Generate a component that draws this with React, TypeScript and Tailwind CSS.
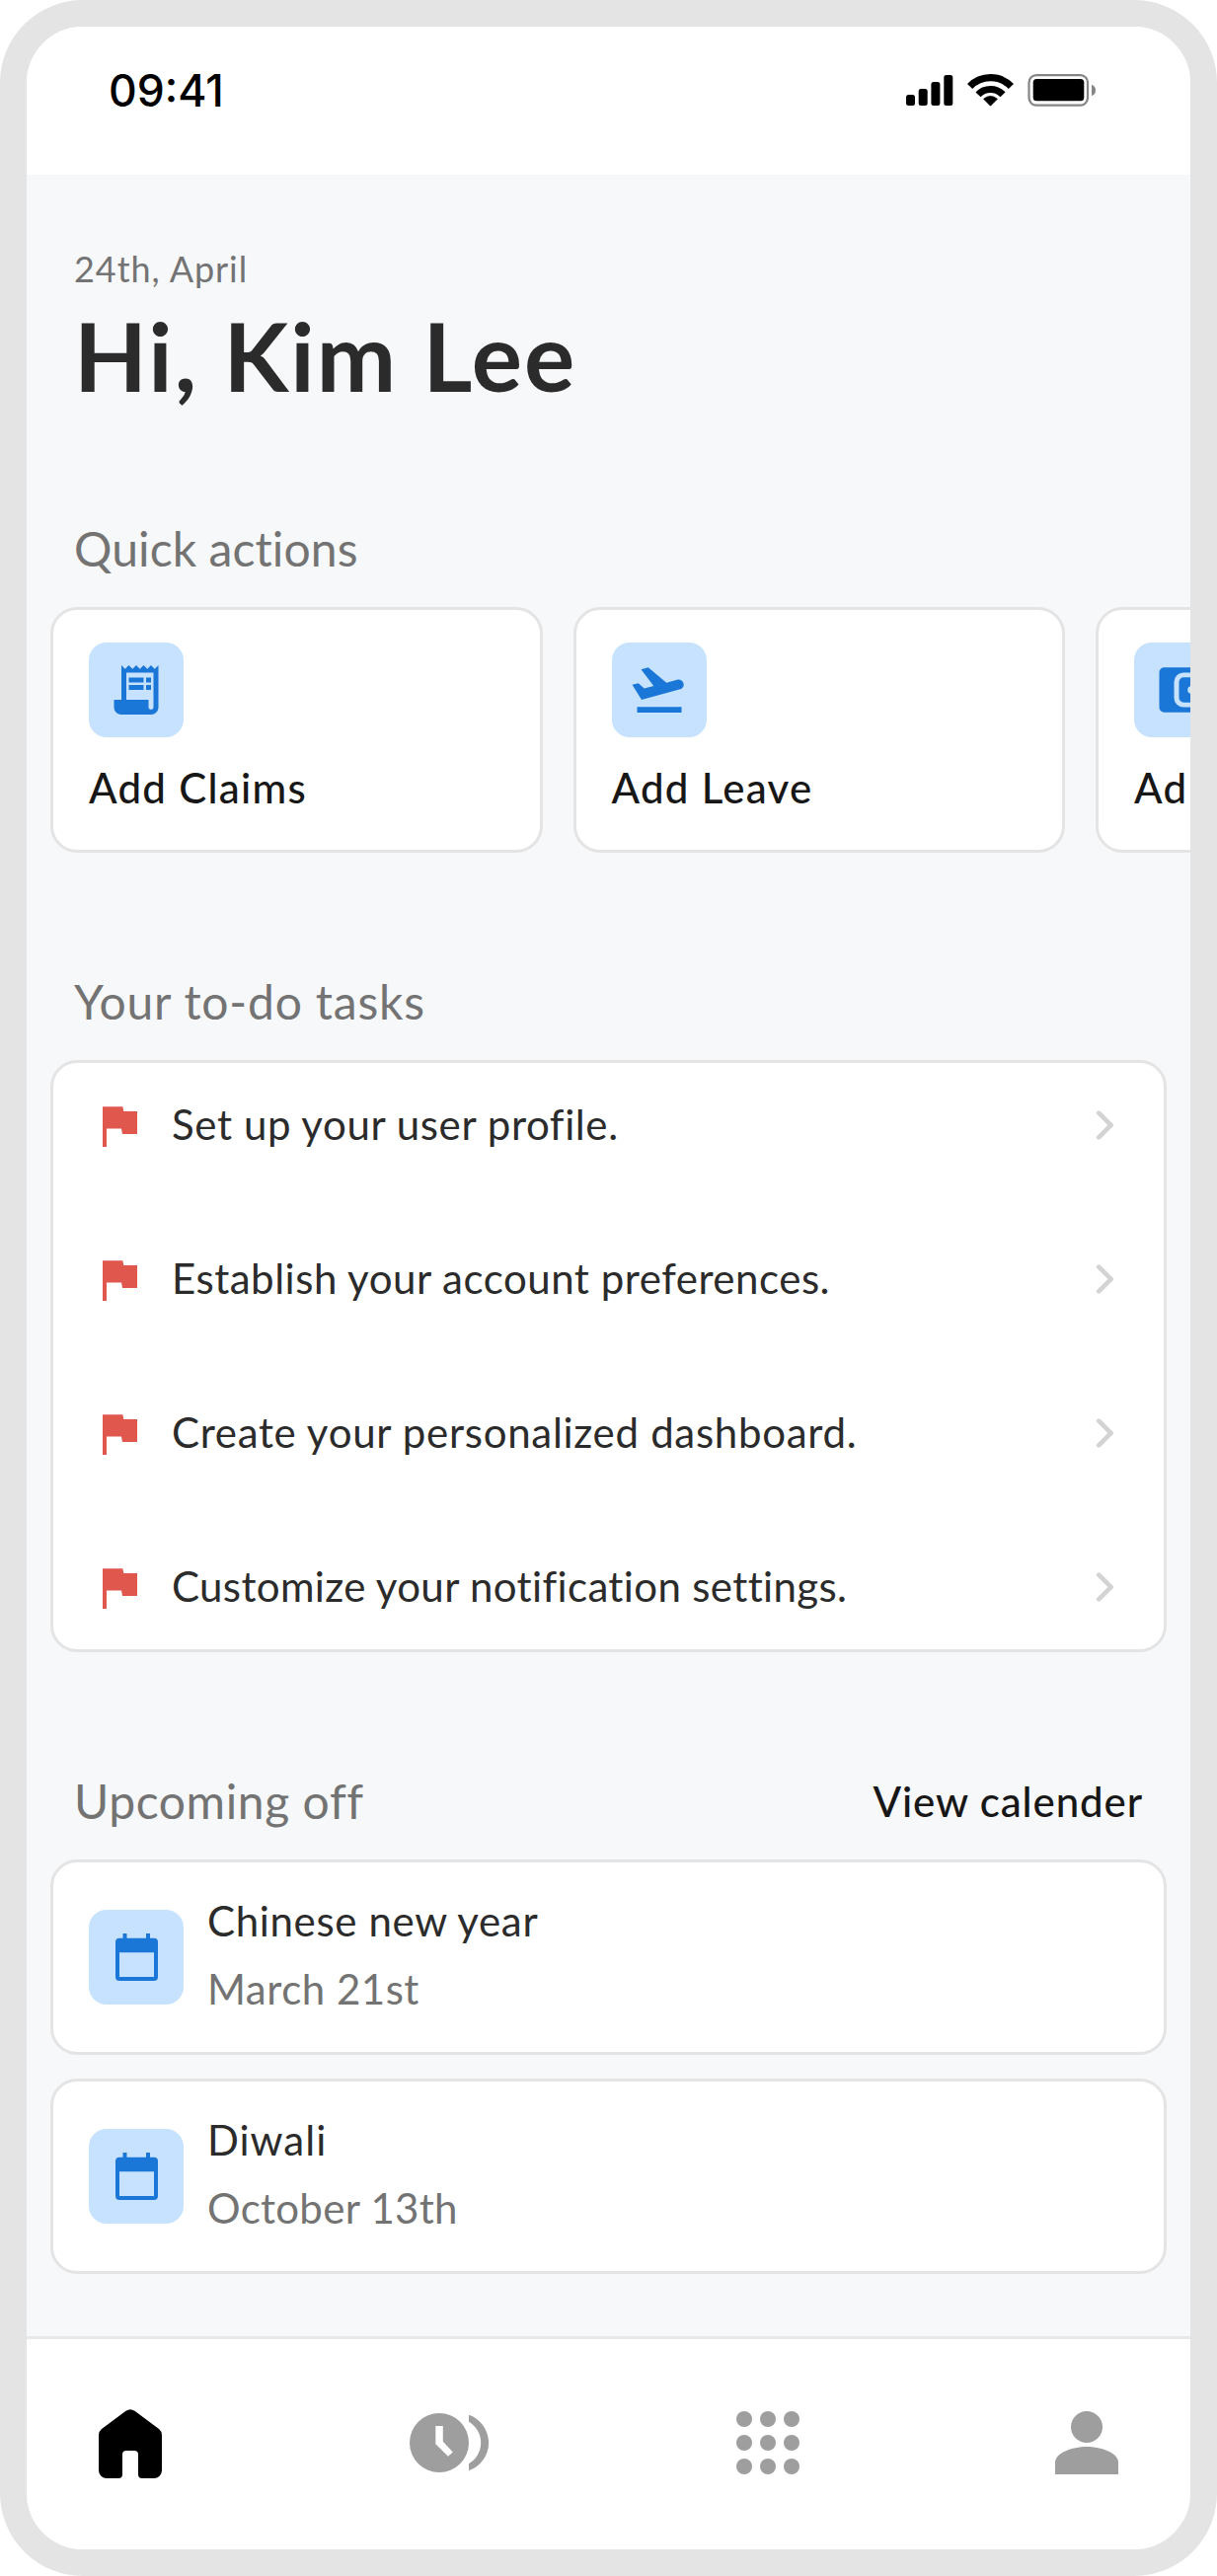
import React from 'react';
import { MdReceiptLong } from 'react-icons/md';

interface QuickAction {
    label: string;
    icon: React.ReactNode;
}

interface Task {
    text: string;
    tracking: string;
}

interface OffDay {
    name: string;
    nameTracking: string;
    date: string;
    dateTracking: string;
}

const TakeoffIcon = () => (
    <svg viewBox="0 0 24 24" className="w-[60px] h-[60px]" fill="currentColor">
        <path d="M3 18.9h18v2.3H3z" />
        <path d="M1 9.9l2.5-.6 2.4 2.1 3.8-1L4.6 3.7l2.9-.8 7.4 6.2 4.3-1.2c1.1-.3 2.3.4 2.6 1.5.3 1.1-.3 2-1.3 2.3L4.8 16z" />
    </svg>
);

const WalletIcon = () => (
    <svg viewBox="0 0 24 24" className="w-[60px] h-[60px]" fill="currentColor">
        <path d="M5 2.9h14a2 2 0 0 1 2 2V5h-8.2A3.8 3.8 0 0 0 9 8.800v6.400A3.800 3.800 0 0 0 12.800 19H21v.1a2 2 0 0 1-2 2H5a2 2 0 0 1-2-2v-14.200a2 2 0 0 1 2-2z" />
        <path d="M12.9 6.9H22v10.200h-9.100a1.900 1.900 0 0 1-1.900-1.900V8.800a1.900 1.900 0 0 1 1.900-1.900zM16 10.500a1.500 1.500 0 1 0 0 3 1.500 1.500 0 0 0 0-3z" fillRule="evenodd" />
    </svg>
);

const CalendarIcon = () => (
    <svg viewBox="0 0 43 48" className="w-[43px] h-[48px]" fill="currentColor">
        <path d="M7.5 0h4v5h-4zM31 0h4v5h-4z" />
        <path fillRule="evenodd" d="M4 4.7h35a4 4 0 0 1 4 4V44a4 4 0 0 1-4 4H4a4 4 0 0 1-4-4V8.700a4 4 0 0 1 4-4zM4 19.300V44h35V19.300z" />
    </svg>
);

const FlagIcon = () => (
    <svg viewBox="0 0 35 41" className="mt-[3px] w-[35px] h-[41px] shrink-0 text-[#df574d]" fill="currentColor">
        <path d="M0 .3h20.300l1 4.700H35v23H20l-1-5.500H4V41H0z" />
    </svg>
);

const ChevronIcon = () => (
    <svg viewBox="0 0 18 30" className="w-[18px] h-[30px] shrink-0" fill="none">
        <path d="M2.3 2.7L14.6 15 2.3 27.3" stroke="#d3d3d3" strokeWidth="4.6" strokeLinecap="round" strokeLinejoin="round" />
    </svg>
);

const quickActions: QuickAction[] = [
    { label: 'Add Claims', icon: <MdReceiptLong className="w-[60px] h-[60px]" /> },
    { label: 'Add Leave', icon: <TakeoffIcon /> },
    { label: 'Ad', icon: <WalletIcon /> },
];

const tasks: Task[] = [
    { text: 'Set up your user profile.', tracking: 'tracking-[0.6px]' },
    { text: 'Establish your account preferences.', tracking: 'tracking-[0.52px]' },
    { text: 'Create your personalized dashboard.', tracking: 'tracking-[0.7px]' },
    { text: 'Customize your notification settings.', tracking: 'tracking-[0.36px]' },
];

const offDays: OffDay[] = [
    { name: 'Chinese new year', nameTracking: 'tracking-[0.65px]', date: 'March 21st', dateTracking: 'tracking-[0.5px]' },
    { name: 'Diwali', nameTracking: 'tracking-[1px]', date: 'October 13th', dateTracking: 'tracking-[0.3px]' },
];

const StatusBar = () => (
    <header className="flex h-[150px] shrink-0 items-start justify-between bg-white pl-[83px] pr-[96px]">
        <span className="mt-[38px] font-['Inter',sans-serif] text-[44.5px] leading-[54px] font-medium text-black">
            09:41
        </span>
        <div className="mt-[48px] flex items-start">
            <svg viewBox="0 0 48 33" className="w-[48px] h-[33px]" fill="#000">
                <rect x="0" y="21" width="9" height="11" rx="2.5" />
                <rect x="12.7" y="15" width="9" height="17" rx="2.5" />
                <rect x="25.4" y="8" width="9" height="24" rx="2.5" />
                <rect x="38.3" y="1" width="9" height="31" rx="2.5" />
            </svg>
            <svg viewBox="0 0 48 33" className="ml-[14px] w-[48px] h-[33px]" fill="none" stroke="#000">
                <path d="M2.6 12.6A29 29 0 0 1 44.4 12.6" strokeWidth="7.2" />
                <path d="M11 20.8A17.2 17.2 0 0 1 36 20.8" strokeWidth="7" />
                <path d="M23.5 32.2L16.6 25.2Q23.5 19.6 30.4 25.2z" fill="#000" strokeWidth="0.8" strokeLinejoin="round" />
            </svg>
            <svg viewBox="0 0 69 33" className="ml-[13px] w-[69px] h-[33px]">
                <rect x="1.5" y="1.1" width="59.5" height="30.5" rx="7.5" fill="none" stroke="#858585" strokeWidth="2.2" />
                <rect x="5.7" y="5" width="51.6" height="22.3" rx="3.5" fill="#000" />
                <path d="M65 10.7q4 1.5 4 5.700t-4 5.700z" fill="#858585" />
            </svg>
        </div>
    </header>
);

const IconTile = ({ children }: { children: React.ReactNode }) => (
    <div className="flex h-[96px] w-[96px] shrink-0 items-center justify-center rounded-[18px] bg-[#c7e2fe] text-[#1b77d7]">
        {children}
    </div>
);

const SectionTitle = ({ children, className = '' }: { children: React.ReactNode; className?: string }) => (
    <h2 className={`pt-[2px] text-[48px] leading-[58px] text-[#737373] ${className}`}>{children}</h2>
);

const BottomNav = () => (
    <nav className="flex h-[216px] shrink-0 items-start border-t-[3px] border-[#e8e8e8] bg-white pl-[73px] pt-[71px]">
        <button aria-label="Home">
            <svg viewBox="0 0 64 70" className="w-[64px] h-[70px]" fill="#000">
                <path d="M27.5 1.8Q32-1.5 36.5 1.8L61 20Q64 22.5 64 26V62a8 8 0 0 1-8 8H44a4 4 0 0 1-4-4V46a4 4 0 0 0-4-4H28a4 4 0 0 0-4 4V66a4 4 0 0 1-4 4H8a8 8 0 0 1-8-8V26Q0 22.5 3 20z" />
            </svg>
        </button>
        <button aria-label="Attendance" className="ml-[251px] mt-1">
            <svg viewBox="0 0 80 60" className="w-[80px] h-[60px]" fill="#9e9e9e">
                <path fillRule="evenodd" d="M30 0a30 30 0 1 1 0 60 30 30 0 1 1 0-60zM26.3 13V31.3L39 43.7 43.8 39.5 33.8 28.7V13z" />
                <path d="M60 1.7A30 30 0 0 1 60 58.3V51.2A24.5 24.5 0 0 0 60 8.8z" />
            </svg>
        </button>
        <button aria-label="Apps" className="ml-[251px] mt-[2px]">
            <svg viewBox="0 0 64 64" className="w-[64px] h-[64px]" fill="#9e9e9e">
                {[8, 32, 56].map((cy) => [8, 32, 56].map((cx) => <circle key={`${cx}-${cy}`} cx={cx} cy={cy} r="8" />))}
            </svg>
        </button>
        <button aria-label="Profile" className="ml-[259px] mt-[2px]">
            <svg viewBox="0 0 64 64" className="w-[64px] h-[64px]" fill="#9e9e9e">
                <circle cx="32" cy="16" r="16" />
                <path d="M0 64V52C0 42.5 17 36 32 36S64 42.5 64 52V64z" />
            </svg>
        </button>
    </nav>
);

export default function App() {
    return (
        <div className="h-[2610px] w-[1233px] bg-white font-['Lato',sans-serif]">
            <div className="flex h-full w-full flex-col overflow-hidden rounded-[84px] border-[27px] border-[#e4e4e4] bg-[#f7f8fa]">
                <StatusBar />

                <main className="flex-1 overflow-hidden pl-6">
                    <div className="px-6 pt-[71px]">
                        <p className="text-[36px] leading-[48px] tracking-[0.95px] text-[#737373]">24th, April</p>
                        <h1 className="mt-1 text-[96px] leading-[120px] font-bold tracking-[2px] text-[#2b2b2b]">Hi, Kim Lee</h1>
                    </div>

                    {/* Quick actions */}
                    <section className="mt-[105px]">
                        <SectionTitle className="px-6 tracking-[0.1px]">Quick actions</SectionTitle>
                        <div className="mt-[30px] flex gap-[31px]">
                            {quickActions.map((action) => (
                                <button
                                    key={action.label}
                                    className="flex h-[249px] w-[498.5px] shrink-0 flex-col items-start rounded-[27px] border-[3px] border-[#e4e4e4] bg-white px-9 pt-[33px]"
                                >
                                    <IconTile>{action.icon}</IconTile>
                                    <span className="mt-[25px] text-[42px] leading-[52px] font-medium tracking-[1.3px] whitespace-nowrap text-[#171717]">
                                        {action.label}
                                    </span>
                                </button>
                            ))}
                        </div>
                    </section>

                    {/* To-do tasks */}
                    <section className="mt-[120px] pr-6">
                        <SectionTitle className="px-6 tracking-[0.8px]">Your to-do tasks</SectionTitle>
                        <ul className="mt-[30px] flex h-[600px] flex-col justify-between rounded-[27px] border-[3px] border-[#e4e4e4] bg-white">
                            {tasks.map((task) => (
                                <li key={task.text} className="flex h-[126px] items-center px-[50px]">
                                    <FlagIcon />
                                    <span className={`ml-[35px] flex-1 pb-[2px] text-[42px] leading-[52px] text-[#2b2b2b] ${task.tracking}`}>
                                        {task.text}
                                    </span>
                                    <ChevronIcon />
                                </li>
                            ))}
                        </ul>
                    </section>

                    {/* Upcoming off */}
                    <section className="mt-[120px] pr-6">
                        <div className="flex items-center justify-between px-6">
                            <SectionTitle className="tracking-[0.6px]">Upcoming off</SectionTitle>
                            <button className="pt-[2px] text-[42px] leading-[58px] font-medium tracking-[0.9px] text-[#171717]">
                                View calender
                            </button>
                        </div>
                        <div className="mt-[30px] flex flex-col gap-6">
                            {offDays.map((day) => (
                                <div
                                    key={day.name}
                                    className="flex h-[198px] items-center gap-6 rounded-[27px] border-[3px] border-[#e4e4e4] bg-white px-9"
                                >
                                    <IconTile>
                                        <CalendarIcon />
                                    </IconTile>
                                    <div className="pb-[4px] text-[42px] leading-[69px]">
                                        <p className={`text-[#2b2b2b] ${day.nameTracking}`}>{day.name}</p>
                                        <p className={`text-[#737373] ${day.dateTracking}`}>{day.date}</p>
                                    </div>
                                </div>
                            ))}
                        </div>
                    </section>
                </main>

                <BottomNav />
            </div>
        </div>
    );
}
